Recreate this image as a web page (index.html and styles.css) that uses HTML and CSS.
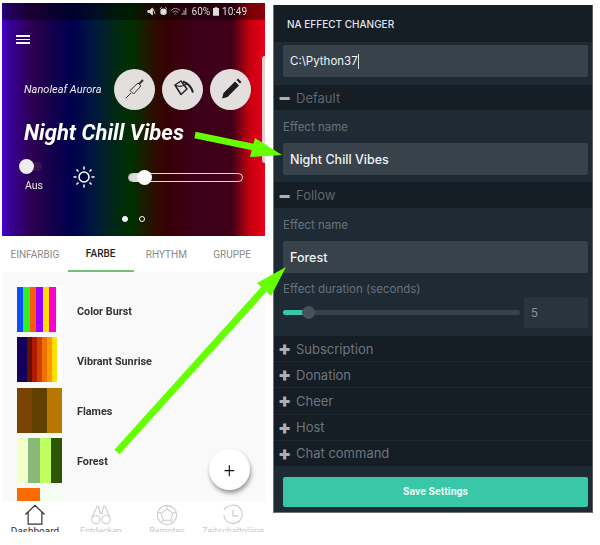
FILE: index.html
```html
<!DOCTYPE html>
<html lang="de">

<head>
    <meta charset="UTF-8">
    <title>NA Effect Changer</title>
    <link rel="stylesheet" href="styles.css">
</head>

<body>
    <div class="page">
        <!-- phone screenshot -->
        <div class="phone">
            <div class="hero">
                <div class="status">
                    <svg class="status-icon" viewBox="0 0 10 10"><path d="M1 4h2l3-3v8L3 6H1z M7 2l2 6" fill="#ddd" stroke="#ddd"/></svg>
                    <svg class="status-icon" viewBox="0 0 10 10"><circle cx="5" cy="5.400" r="3.600" fill="#ddd"/><path d="M1 2l2-1.500M9 2L7 .5" stroke="#ddd"/></svg>
                    <svg class="status-icon wide" viewBox="0 0 20 10"><path d="M0 4q5-5 10 0M2 6q3-3 6 0M4 8q1-1 2 0" fill="none" stroke="#aaa"/><path d="M12 9h1V7h-1zM14 9h1V4h-1zM16 9h1V1h-1z" fill="#ccc"/></svg>
                    <span>60%</span>
                    <svg class="status-icon batt" viewBox="0 0 7 10"><path d="M2 0h3v1h2v9H0V1h2z" fill="#ddd"/></svg>
                    <span>10:49</span>
                </div>
                <div class="menu"><i></i><i></i><i></i></div>
                <div class="device-row">
                    <span class="device-name">Nanoleaf Aurora</span>
                    <div class="round-btn">
                        <svg viewBox="0 0 24 24" width="24" height="24"><path d="M7 13.500L15 6l3 3-7.500 8z" fill="none" stroke="#333" stroke-width="1"/><path d="M3 21l5-5" stroke="#333" stroke-width="1"/><path d="M16 7l4-4" stroke="#333" stroke-width="2"/></svg>
                    </div>
                    <div class="round-btn">
                        <svg viewBox="0 0 24 24" width="24" height="24"><path d="M4 8l6-4 6 8-6 5.500z" fill="none" stroke="#222" stroke-width="1.500" stroke-linejoin="round"/><path d="M4 8q5 3 12-1" fill="none" stroke="#222" stroke-width="1.200"/><path d="M12 4.500q8 3 10 11" fill="none" stroke="#222" stroke-width="2"/></svg>
                    </div>
                    <div class="round-btn">
                        <svg viewBox="0 0 24 24" width="24" height="24"><path d="M3 21.500l1.500-5.500L16 4.500l4 4L8.500 20zM17.500 3l1.500-1.500 3.500 3.500L21 6.500z" fill="#1c1c1c"/></svg>
                    </div>
                </div>
                <div class="effect-title">Night Chill Vibes</div>
                <div class="controls">
                    <div class="power">
                        <div class="toggle"><i></i></div>
                        <span>Aus</span>
                    </div>
                    <svg class="sun" viewBox="0 0 24 24" width="24" height="24">
                        <circle cx="12" cy="12" r="5" fill="none" stroke="#fff" stroke-width="1.500"/>
                        <path d="M12 1.500v3M12 19.500v3M1.500 12h3M19.500 12h3M4.500 4.500l2 2M17.500 17.500l2 2M19.500 4.500l-2 2M6.500 17.500l-2 2" stroke="#fff" stroke-width="1.500"/>
                    </svg>
                    <div class="bright">
                        <div class="bright-fill"></div>
                        <div class="bright-knob"></div>
                    </div>
                </div>
                <div class="dots"><i class="on"></i><i></i></div>
                <div class="peek"></div>
            </div>
            <div class="tabs">
                <div class="tab">EINFARBIG</div>
                <div class="tab active">FARBE</div>
                <div class="tab">RHYTHM</div>
                <div class="tab">GRUPPE</div>
            </div>
            <div class="list">
                <div class="item">
                    <div class="swatch burst"></div>
                    <span>Color Burst</span>
                </div>
                <div class="item">
                    <div class="swatch sunrise"></div>
                    <span>Vibrant Sunrise</span>
                </div>
                <div class="item">
                    <div class="swatch flames"></div>
                    <span>Flames</span>
                </div>
                <div class="item">
                    <div class="swatch forest"></div>
                    <span>Forest</span>
                </div>
                <div class="item cut">
                    <div class="swatch last"></div>
                </div>
                <div class="fab">+</div>
            </div>
            <div class="nav">
                <div class="nav-item current">
                    <svg viewBox="0 0 24 24" width="22" height="22"><path d="M1.500 11.500L12 1.500l10.500 10M4.500 9v13h15V9" fill="none" stroke="#333" stroke-width="1.300"/></svg>
                    <span>Dashboard</span>
                </div>
                <div class="nav-item">
                    <svg viewBox="0 0 24 24" width="22" height="22"><path d="M8 2L2 15M16 2l6 13M10 10h4M9 2l2 8M15 2l-2 8" fill="none" stroke="#ccc" stroke-width="1.200"/><circle cx="6.500" cy="17" r="4.500" fill="none" stroke="#ccc" stroke-width="1.200"/><circle cx="17.500" cy="17" r="4.500" fill="none" stroke="#ccc" stroke-width="1.200"/></svg>
                    <span>Entdecken</span>
                </div>
                <div class="nav-item">
                    <svg viewBox="0 0 24 24" width="22" height="22"><circle cx="12" cy="12" r="10.500" fill="none" stroke="#ccc" stroke-width="1.200"/><path d="M12 5.500l6.500 4.700-2.500 7.600H8l-2.500-7.600zM12 1.500v4M22 9l-3.500 1.200M18.500 20.500L16 17.800M5.500 20.500L8 17.800M2 9l3.500 1.200" fill="none" stroke="#ccc" stroke-width="1.200"/></svg>
                    <span>Remotes</span>
                </div>
                <div class="nav-item">
                    <svg viewBox="0 0 24 24" width="22" height="22"><path d="M5 4a10 10 0 1 1-3 8M2 6l3-3M12 6v7h6" fill="none" stroke="#ccc" stroke-width="1.200"/></svg>
                    <span>Zeitschaltpläne</span>
                </div>
            </div>
        </div>

        <!-- settings panel -->
        <div class="panel">
            <div class="panel-head">NA EFFECT CHANGER</div>
            <div class="path-row">
                <div class="field path">C:\Python37<i class="caret"></i></div>
            </div>
            <div class="sec-head"><span class="sign">−</span>Default</div>
            <div class="sec-body">
                <div class="label">Effect name</div>
                <div class="field">Night Chill Vibes</div>
            </div>
            <div class="sec-head follow"><span class="sign">−</span>Follow</div>
            <div class="sec-body last-body">
                <div class="label">Effect name</div>
                <div class="field">Forest</div>
                <div class="label second">Effect duration (seconds)</div>
                <div class="duration">
                    <div class="track"><div class="track-fill"></div><div class="track-knob"></div></div>
                    <div class="num">5</div>
                </div>
            </div>
            <div class="sec-head closed"><span class="sign">+</span>Subscription</div>
            <div class="sec-head closed"><span class="sign">+</span>Donation</div>
            <div class="sec-head closed"><span class="sign">+</span>Cheer</div>
            <div class="sec-head closed"><span class="sign">+</span>Host</div>
            <div class="sec-head closed"><span class="sign">+</span>Chat command</div>
            <div class="save-row">
                <div class="save">Save Settings</div>
            </div>
        </div>

        <!-- green arrows over both screenshots -->
        <svg class="arrows" viewBox="0 0 600 545" width="600" height="545">
            <path d="M195 135L258 148" stroke="#66ff00" stroke-width="6.500"/>
            <polygon points="282,155 255,138 250,157" fill="#66ff00"/>
            <path d="M117 452L265 288" stroke="#66ff00" stroke-width="7"/>
            <polygon points="286,267 257,283 271,296" fill="#66ff00"/>
        </svg>
    </div>
</body>

</html>
```

FILE: styles.css
```css
* {
    margin: 0;
    padding: 0;
    box-sizing: border-box;
}

body {
    background: #fff;
    overflow: hidden;
}

.page {
    position: relative;
    width: 600px;
    height: 545px;
    display: flex;
    align-items: flex-start;
    font-family: Roboto, sans-serif;
    filter: blur(0.35px);
}

.arrows {
    position: absolute;
    left: 0;
    top: 0;
}

/* phone */
.phone {
    width: 263px;
    height: 529px;
    margin: 3px 0 0 2px;
    overflow: hidden;
    display: flex;
    flex-direction: column;
    background: #fff;
}

.hero {
    position: relative;
    height: 233px;
    flex: none;
    color: #fff;
    background: linear-gradient(90deg, #4a00e0 0, #3a00a0 5px, #2c0050 30px, #14004c 50px, #00004e 70px, #001a3a 95px, #002a10 115px, #003000 130px, #2a1000 150px, #360004 165px, #3c0018 190px, #400018 230px, #c80010 248px, #e80018 263px);
}

.status {
    height: 17px;
    padding-right: 18px;
    background: rgba(0, 0, 0, 0.4);
    display: flex;
    align-items: center;
    justify-content: flex-end;
    gap: 3px;
    font-size: 10px;
    color: #ddd;
}

.status-icon {
    width: 9px;
    height: 9px;
}

.status-icon.wide {
    width: 18px;
}

.status-icon.batt {
    width: 6px;
}

.menu {
    width: 14px;
    margin: 15px 0 0 14px;
    display: flex;
    flex-direction: column;
    gap: 2px;
}

.menu i {
    display: block;
    height: 1.500px;
    background: #fff;
}

.device-row {
    margin: 25px 0 0 22px;
    display: flex;
    align-items: center;
    gap: 7px;
}

.device-name {
    width: 82px;
    margin-right: 1px;
    font-size: 11px;
    font-style: italic;
    white-space: nowrap;
    color: #eee;
}

.round-btn {
    width: 41px;
    height: 41px;
    border-radius: 50%;
    background: #e3dfdf;
    display: flex;
    align-items: center;
    justify-content: center;
}

.effect-title {
    margin: 10px 0 0 22px;
    font-size: 22px;
    line-height: 26px;
    font-weight: 700;
    font-style: italic;
    white-space: nowrap;
}

.controls {
    margin: 13px 0 0 17px;
    display: flex;
    align-items: flex-start;
}

.power {
    width: 30px;
    display: flex;
    flex-direction: column;
    align-items: center;
    font-size: 10.500px;
    color: #e8e8e8;
}

.toggle {
    width: 30px;
    height: 15px;
    margin-bottom: 5px;
    position: relative;
}

.toggle::before {
    content: "";
    position: absolute;
    left: 10px;
    top: 3px;
    width: 13px;
    height: 9px;
    border-radius: 5px;
    background: rgba(60, 30, 80, 0.7);
}

.toggle i {
    position: absolute;
    left: 0;
    top: 0;
    width: 15px;
    height: 15px;
    border-radius: 50%;
    background: #eee;
}

.sun {
    margin: 6px 0 0 23px;
}

.bright {
    position: relative;
    width: 115px;
    height: 9px;
    margin: 14px 0 0 32px;
    border: 1px solid #ddd;
    border-radius: 5px;
}

.bright-fill {
    width: 14px;
    height: 100%;
    background: #ddd;
    border-radius: 4px 0 0 4px;
}

.bright-knob {
    position: absolute;
    left: 8px;
    top: -4px;
    width: 15px;
    height: 15px;
    border-radius: 50%;
    background: #fff;
}

.dots {
    margin: 24px 0 0 120px;
    display: flex;
    gap: 11px;
}

.dots i {
    width: 6px;
    height: 6px;
    border-radius: 50%;
    border: 1px solid #fff;
}

.dots i.on {
    background: #fff;
}

.peek {
    position: absolute;
    right: 0;
    top: 53px;
    width: 3px;
    height: 107px;
    background: #f0c8d0;
    border-radius: 3px 0 0 3px;
}

.tabs {
    height: 36px;
    flex: none;
    display: flex;
    font-size: 10px;
    color: #8a8a8a;
}

.tab {
    display: flex;
    align-items: center;
    justify-content: center;
    width: 66px;
    padding-top: 1px;
}

.tab.active {
    color: #222;
    font-weight: 500;
    border-bottom: 2px solid #72bf78;
}

.list {
    position: relative;
    flex: 1;
    padding: 15px 0 0 15px;
    background: #f9f9f9;
    overflow: hidden;
}

.item {
    display: flex;
    align-items: center;
    height: 45px;
    margin-bottom: 5.300px;
    font-size: 10.800px;
    font-weight: 700;
    color: #333;
}

.item span {
    margin: 3px 0 0 15px;
}

.swatch {
    width: 45px;
    height: 45px;
    flex: none;
    background: #fff;
}

.item.cut {
    align-items: flex-start;
}

.burst {
    background: linear-gradient(90deg, #0a50ff 0 6.500px, #33ee22 6.500px 13px, #ff5a10 13px 19.500px, #9a00ff 19.500px 26px, #ffdd00 26px 32.500px, #ff00cc 32.500px 39px, #fff 39px);
}

.sunrise {
    background: linear-gradient(90deg, #14005a 0 10px, #6a0f00 10px 15px, #b01a00 15px 20px, #d04000 20px 25px, #f07000 25px 30px, #ff9800 30px 35px, #ffe000 35px 40px, #fff 40px);
}

.flames {
    background: linear-gradient(90deg, #7a4400 0 15px, #5f4000 15px 30px, #b87800 30px);
}

.forest {
    background: linear-gradient(90deg, #f2ffc8 0 11px, #8ab878 11px 23px, #c0ff60 23px 34px, #2f5500 34px);
}

.last {
    background: linear-gradient(90deg, #ff6a00 0 23px, #f2fff0 23px);
}

.fab {
    position: absolute;
    right: 15px;
    top: 177px;
    width: 41px;
    height: 41px;
    border-radius: 50%;
    background: #fff;
    box-shadow: 1px 3px 4px rgba(0, 0, 0, 0.4);
    display: flex;
    align-items: center;
    justify-content: center;
    font-size: 20px;
    font-weight: 300;
    line-height: 1;
    color: #111;
}

.nav {
    height: 31px;
    flex: none;
    background: #fff;
    padding-top: 3px;
    display: flex;
    overflow: hidden;
}

.nav-item {
    width: 66px;
    flex: none;
    display: flex;
    flex-direction: column;
    align-items: center;
    font-size: 9px;
    line-height: 11px;
    white-space: nowrap;
    color: #c8c8c8;
}

.nav-item svg {
    flex: none;
}

.nav-item.current {
    color: #333;
    font-size: 10px;
}

/* panel */
.panel {
    width: 320px;
    height: 508px;
    margin: 5px 0 0 8px;
    background: #1e2b34;
    border-left: 1px solid #6b7278;
    border-right: 1px solid #555c62;
    border-bottom: 1px solid #6b7278;
    font-family: Inter, sans-serif;
    display: flex;
    flex-direction: column;
}

.panel-head {
    height: 37px;
    flex: none;
    padding: 1px 0 0 13px;
    display: flex;
    align-items: center;
    background: #151d25;
    color: #e2e5e8;
    font-size: 10px;
    font-weight: 500;
}

.path-row {
    height: 43px;
    flex: none;
    padding: 3px 4px 0 9px;
}

.field {
    height: 32px;
    padding-left: 7px;
    display: flex;
    align-items: center;
    background: #37424a;
    border-radius: 2px;
    color: #f2f4f5;
    font-size: 12.500px;
    font-weight: 500;
}

.path {
    font-size: 11.500px;
    font-weight: 400;
}

.caret {
    width: 1px;
    height: 15px;
    background: #ddd;
}

.sec-head {
    height: 25px;
    flex: none;
    display: flex;
    align-items: center;
    background: #151d25;
    color: #5d666d;
    font-size: 13px;
}

.sec-head.follow {
    height: 26px;
}

.sec-head.closed {
    height: 26.200px;
    border-bottom: 1px solid #1d2830;
    color: #6e767c;
}

.sign {
    width: 22px;
    padding-left: 4px;
    font-weight: 900;
    font-size: 19px;
    line-height: 1;
    color: #aab0b5;
}

.sec-body {
    height: 72px;
    flex: none;
    padding: 0 4px 0 9px;
}

.last-body {
    height: 128px;
}

.label {
    height: 33px;
    padding-top: 10px;
    font-size: 11.500px;
    line-height: 14px;
    color: #68727a;
}

.label.second {
    height: 24px;
    padding-top: 9px;
}

.duration {
    display: flex;
    align-items: center;
    gap: 4px;
}

.track {
    position: relative;
    width: 237px;
    height: 5px;
    background: #37424a;
    border-radius: 3px;
}

.track-fill {
    width: 22px;
    height: 100%;
    background: #38c8a8;
    border-radius: 3px 0 0 3px;
}

.track-knob {
    position: absolute;
    left: 19px;
    top: -4px;
    width: 13px;
    height: 13px;
    border-radius: 50%;
    background: #46535c;
}

.num {
    width: 64px;
    height: 31px;
    padding-left: 7px;
    display: flex;
    align-items: center;
    background: #29343c;
    border-radius: 2px;
    color: #8a9298;
    font-size: 11.500px;
}

.save-row {
    padding: 10px 4px 0 9px;
}

.save {
    height: 30px;
    display: flex;
    align-items: center;
    justify-content: center;
    background: #38c8a8;
    border-radius: 2px;
    color: #eafaf6;
    font-family: Roboto, sans-serif;
    font-size: 10.500px;
    font-weight: 700;
}
```
